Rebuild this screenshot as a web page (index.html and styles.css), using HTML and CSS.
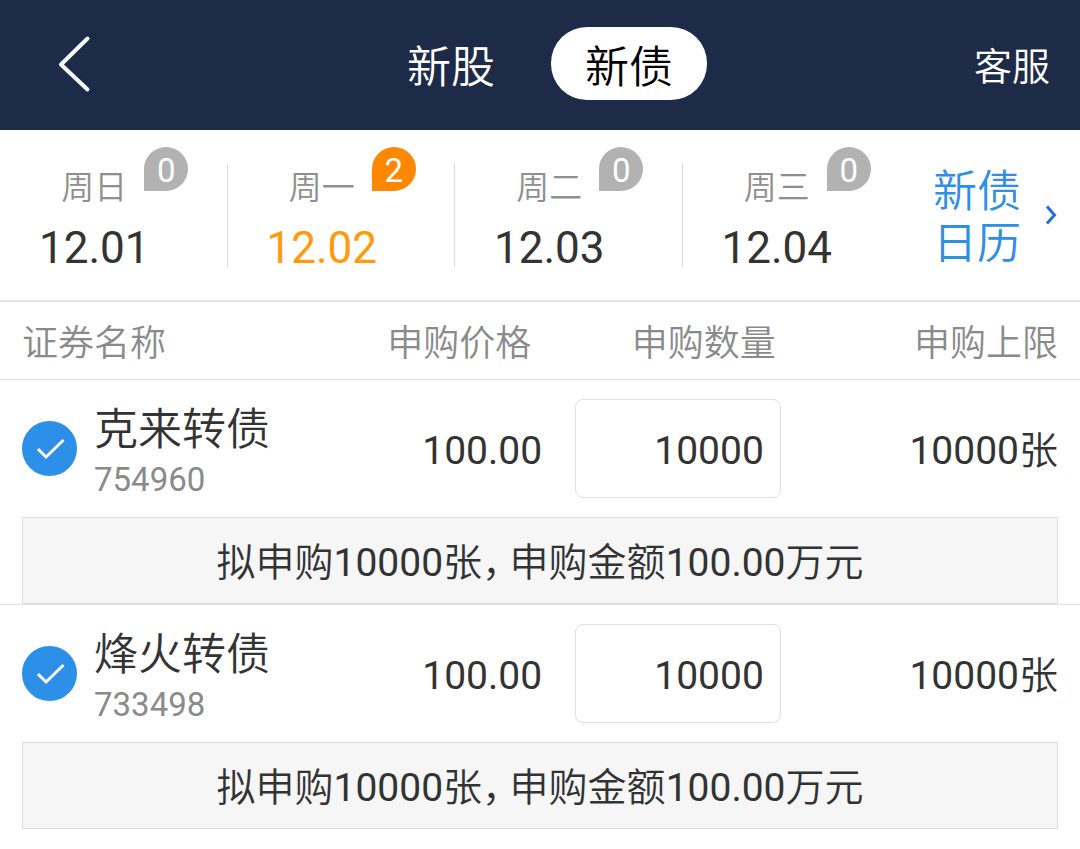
FILE: index.html
```html
<!DOCTYPE html>
<html lang="zh-CN">
<head>
<meta charset="utf-8">
<meta name="viewport" content="width=device-width, initial-scale=1">
<title>新债申购</title>
<link rel="stylesheet" href="styles.css">
</head>
<body>
<header class="topbar">
  <button class="back" type="button" aria-label="返回">
    <svg class="back-icon" viewBox="0 0 34 58" aria-hidden="true"><path d="M30.500 3.500 4 29.500 30.500 54.500"/></svg>
  </button>
  <nav class="tabs">
    <button class="tab" type="button">新股</button>
    <button class="tab tab-active" type="button" aria-current="page">新债</button>
  </nav>
  <a class="service" href="#service">客服</a>
</header>

<section class="dates">
  <button class="day" type="button">
    <span class="weekday">周日<span class="badge">0</span></span>
    <span class="date">12.01</span>
  </button>
  <button class="day day-active" type="button">
    <span class="weekday">周一<span class="badge">2</span></span>
    <span class="date">12.02</span>
  </button>
  <button class="day" type="button">
    <span class="weekday">周二<span class="badge">0</span></span>
    <span class="date">12.03</span>
  </button>
  <button class="day" type="button">
    <span class="weekday">周三<span class="badge">0</span></span>
    <span class="date">12.04</span>
  </button>
  <a class="calendar" href="#calendar">
    <span class="calendar-text">新债<br>日历</span>
    <svg class="calendar-icon" viewBox="0 0 12 20" aria-hidden="true"><path d="M2 1.500 9.500 10 2 18.500"/></svg>
  </a>
</section>

<main>
  <table class="bonds">
    <colgroup>
      <col class="col-name"><col class="col-price"><col class="col-count"><col class="col-limit">
    </colgroup>
    <thead>
      <tr>
        <th class="name-cell" scope="col">证券名称</th>
        <th class="price-head" scope="col">申购价格</th>
        <th class="count-head" scope="col">申购数量</th>
        <th class="limit-head" scope="col">申购上限</th>
      </tr>
    </thead>
    <tbody>
      <tr class="bond">
        <td class="name-cell">
          <label class="security">
            <span class="check">
              <input class="check-input" type="checkbox" checked>
              <svg class="check-icon" viewBox="0 0 55 55" aria-hidden="true"><path d="M16 28 24 36 41.500 19"/></svg>
            </span>
            <span class="security-text">
              <span class="security-name">克来转债</span>
              <span class="security-code">754960</span>
            </span>
          </label>
        </td>
        <td class="price-cell">100.00</td>
        <td><input class="count" type="text" inputmode="numeric" value="10000" aria-label="克来转债申购数量"></td>
        <td class="limit-cell"><span class="number">10000</span>张</td>
      </tr>
      <tr>
        <td class="summary-cell" colspan="4"><p class="summary">拟申购<span class="number">10000</span>张<span class="comma">，</span>申购金额<span class="number">100.00</span>万元</p></td>
      </tr>
    </tbody>
    <tbody>
      <tr class="bond">
        <td class="name-cell">
          <label class="security">
            <span class="check">
              <input class="check-input" type="checkbox" checked>
              <svg class="check-icon" viewBox="0 0 55 55" aria-hidden="true"><path d="M16 28 24 36 41.500 19"/></svg>
            </span>
            <span class="security-text">
              <span class="security-name">烽火转债</span>
              <span class="security-code">733498</span>
            </span>
          </label>
        </td>
        <td class="price-cell">100.00</td>
        <td><input class="count" type="text" inputmode="numeric" value="10000" aria-label="烽火转债申购数量"></td>
        <td class="limit-cell"><span class="number">10000</span>张</td>
      </tr>
      <tr>
        <td class="summary-cell" colspan="4"><p class="summary">拟申购<span class="number">10000</span>张<span class="comma">，</span>申购金额<span class="number">100.00</span>万元</p></td>
      </tr>
    </tbody>
  </table>
</main>
</body>
</html>
```
FILE: styles.css
```css
* {
  box-sizing: border-box;
}

body {
  margin: 0;
  background: #fff;
  color: #333;
  font-family: Roboto, "Noto Sans CJK SC", sans-serif;
  font-weight: 350;
}

button,
input {
  margin: 0;
  padding: 0;
  border: 0;
  background: none;
  color: inherit;
  font: inherit;
}

a {
  color: inherit;
  text-decoration: none;
}

.badge,
.date,
.number,
.price-cell,
.count,
.security-code {
  font-weight: 400;
}

.topbar {
  display: grid;
  grid-template-columns: 1fr auto 1fr;
  align-items: center;
  height: 130px;
  padding: 0 30px 3px;
  background: #1d2b49;
  color: #fff;
}

.back {
  justify-self: start;
  padding: 0 27px;
}

.back-icon {
  display: block;
  width: 34px;
  height: 58px;
  fill: none;
  stroke: #f4f8ff;
  stroke-width: 4;
  stroke-linecap: round;
  stroke-linejoin: round;
}

.tabs {
  display: flex;
  gap: 22px;
}

.tab {
  height: 73px;
  padding: 9px 34px 0;
  border-radius: 36px;
  font-size: 44px;
  line-height: 64px;
}

.tab-active {
  background: #fff;
  color: #000;
}

.service {
  justify-self: end;
  font-size: 38px;
}

.dates {
  display: grid;
  grid-template-columns: repeat(4, 1fr) 170px;
  border-bottom: 2px solid #e2e2e2;
  padding: 33px 0;
}

.day {
  display: flex;
  flex-direction: column;
  align-items: center;
  height: 104px;
  padding-right: 38px;
  border-right: 1px solid #ddd;
}

.day:nth-child(4) {
  border-right-color: transparent;
}

.weekday {
  position: relative;
  color: #8f8f8f;
  font-size: 33px;
  line-height: 50px;
}

.badge {
  position: absolute;
  left: 100%;
  top: -16px;
  width: 44px;
  height: 44px;
  margin-left: 17px;
  border-radius: 22px 22px 22px 0;
  background: #b2b2b2;
  color: #fff;
  line-height: 48px;
  text-align: center;
}

.date {
  font-size: 44px;
  line-height: 70px;
}

.day-active .date {
  color: #ff9a0c;
}

.day-active .badge {
  background: #ff8800;
}

.calendar {
  display: flex;
  align-items: center;
  justify-content: flex-end;
  gap: 24px;
  height: 104px;
  padding-right: 23px;
  color: #2f8fe6;
  font-size: 44px;
  line-height: 52px;
}

.calendar-text {
  padding-top: 6px;
}

.calendar-icon {
  width: 12px;
  height: 20px;
  fill: none;
  stroke: #2370dc;
  stroke-width: 3;
}

.bonds {
  width: 100%;
  table-layout: fixed;
  border-spacing: 0;
  font-size: 39px;
  text-align: right;
}

.col-name {
  width: 32%;
}

.col-price {
  width: 18.2%;
}

.col-count {
  width: 22.1%;
}

.col-limit {
  width: 27.7%;
}

.bonds th {
  height: 78px;
  padding: 6px 0 0;
  border-bottom: 1px solid #e2e2e2;
  color: #8a8a8a;
  font-size: 36px;
  font-weight: 350;
  line-height: 52px;
}

.bonds td {
  padding: 0;
}

.bonds .name-cell {
  padding-left: 22px;
  text-align: left;
}

.bonds .price-head {
  padding-right: 11px;
}

.bonds .price-cell {
  padding-top: 4px;
}

.bonds .count-head {
  padding-right: 5px;
}

.bonds .limit-head {
  padding-right: 22px;
}

.bonds .limit-cell {
  padding: 0 22px 4px 0;
}

.bond {
  height: 137px;
}

.security {
  display: flex;
  align-items: center;
  gap: 17px;
}

.check {
  display: grid;
}

.check-input,
.check-icon {
  grid-area: 1 / 1;
  width: 55px;
  height: 55px;
}

.check-input {
  appearance: none;
  border: 2px solid #ccc;
  border-radius: 50%;
}

.check-input:checked {
  border-color: #2c90e8;
  background: #2c90e8;
}

.check-icon {
  fill: none;
  stroke: #fff;
  stroke-width: 3;
  pointer-events: none;
}

.security-text {
  display: flex;
  flex-direction: column;
  padding-top: 3px;
}

.security-name {
  font-size: 44px;
  line-height: 60px;
}

.security-code {
  color: #8a8a8a;
  font-size: 33px;
  line-height: 40px;
}

.count {
  display: block;
  width: 206px;
  height: 99px;
  margin-left: auto;
  padding: 4px 16px 0;
  border: 1px solid #e0e0e0;
  border-radius: 8px;
  text-align: right;
}

.bonds .summary-cell {
  padding: 0 22px;
  border-bottom: 1px solid #e2e2e2;
}

.bonds tbody:last-child .summary-cell {
  border-bottom: 0;
}

.summary {
  margin: 0;
  padding-top: 6px;
  border: 1px solid #dedede;
  background: #f6f6f6;
  line-height: 79px;
  text-align: center;
}

.comma {
  margin-right: 8px;
  font-feature-settings: "halt";
}
```
